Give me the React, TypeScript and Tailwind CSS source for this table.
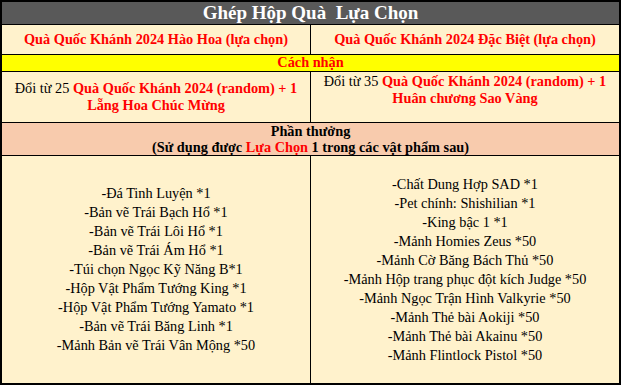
const leftItems = [
  '-Đá Tinh Luyện *1',
  '-Bản vẽ Trái Bạch Hổ *1',
  '-Bản vẽ Trái Lôi Hổ *1',
  '-Bản vẽ Trái Ám Hổ *1',
  '-Túi chọn Ngọc Kỹ Năng B*1',
  '-Hộp Vật Phẩm Tướng King *1',
  '-Hộp Vật Phẩm Tướng Yamato *1',
  '-Bản vẽ Trái Băng Linh *1',
  '-Mảnh Bản vẽ Trái Vân Mộng *50',
]

const rightItems = [
  '-Chất Dung Hợp SAD *1',
  '-Pet chính: Shishilian *1',
  '-King bậc 1 *1',
  '-Mảnh Homies Zeus *50',
  '-Mảnh Cờ Băng Bách Thủ *50',
  '-Mảnh Hộp trang phục đột kích Judge *50',
  '-Mảnh Ngọc Trận Hình Valkyrie *50',
  '-Mảnh Thẻ bài Aokiji *50',
  '-Mảnh Thẻ bài Akainu *50',
  '-Mảnh Flintlock Pistol *50',
]

const ItemList = ({ items }: { items: string[] }) => (
  <div className="flex-1 flex flex-col items-center justify-center text-[14.3px] leading-[19px] text-black">
    {items.map((item) => (
      <div key={item}>{item}</div>
    ))}
  </div>
)

export default function App() {
  return (
    <div
      className="w-[621px] h-[385px] border-2 border-black flex flex-col bg-[#fff2cc]"
      style={{ fontFamily: '"Liberation Serif", "Times New Roman", serif' }}
    >
      {/* tiêu đề */}
      <div className="h-[22px] bg-[#595959] border-b border-black flex items-center justify-center text-white font-bold text-[19px] box-content whitespace-pre">
        Ghép Hộp Quà  Lựa Chọn
      </div>

      <div className="h-[29px] flex border-b border-black box-content text-[#ff0000] font-bold text-[14.3px]">
        <div className="flex-1 flex items-center justify-center border-r border-black">
          Quà Quốc Khánh 2024 Hào Hoa (lựa chọn)
        </div>
        <div className="flex-1 flex items-center justify-center">
          Quà Quốc Khánh 2024 Đặc Biệt (lựa chọn)
        </div>
      </div>

      {/* cách nhận */}
      <div className="h-[16px] bg-[#ffff00] border-b border-black box-content flex items-center justify-center text-[#ff0000] font-bold text-[14.3px]">
        Cách nhận
      </div>

      <div className="h-[50px] flex border-b border-black box-content text-[14.3px] leading-[17px]">
        <div className="flex-1 flex items-center justify-center border-r border-black text-center">
          <div>
            Đổi từ 25 <span className="text-[#ff0000] font-bold">Quà Quốc Khánh 2024 (random) + 1</span>
            <br />
            <span className="text-[#ff0000] font-bold">Lẵng Hoa Chúc Mừng</span>
          </div>
        </div>
        <div className="flex-1 text-center pt-[1px]">
          Đổi từ 35 <span className="text-[#ff0000] font-bold">Quà Quốc Khánh 2024 (random) + 1</span>
          <br />
          <span className="text-[#ff0000] font-bold">Huân chương Sao Vàng</span>
        </div>
      </div>

      {/* phần thưởng */}
      <div className="h-[32px] bg-[#f8cbad] border-b border-black box-content flex flex-col items-center justify-center font-bold text-[14.3px] leading-[16px]">
        <div>Phần thưởng</div>
        <div>
          (Sử dụng được <span className="text-[#ff0000]">Lựa Chọn</span> 1 trong các vật phẩm sau)
        </div>
      </div>

      <div className="flex-1 flex">
        <div className="flex-1 flex border-r border-black">
          <ItemList items={leftItems} />
        </div>
        <div className="flex-1 flex">
          <ItemList items={rightItems} />
        </div>
      </div>
    </div>
  )
}
